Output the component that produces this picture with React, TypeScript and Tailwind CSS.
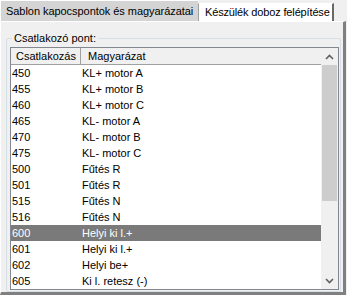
const rows: [string, string][] = [
  ["450", "KL+ motor A"],
  ["455", "KL+ motor B"],
  ["460", "KL+ motor C"],
  ["465", "KL- motor A"],
  ["470", "KL- motor B"],
  ["475", "KL- motor C"],
  ["500", "Fűtés R"],
  ["501", "Fűtés R"],
  ["515", "Fűtés N"],
  ["516", "Fűtés N"],
  ["600", "Helyi ki l.+"],
  ["601", "Helyi ki l.+"],
  ["602", "Helyi be+"],
  ["605", "Ki l. retesz (-)"],
]

const App = () => {
  return (
    <div
      className="w-[347px] h-[295px] bg-[#f0f0f0] text-[11px] text-black flex flex-col overflow-hidden whitespace-nowrap"
      style={{ fontFamily: '"Liberation Sans", Arial, sans-serif' }}
    >
      {/* tabs */}
      <div className="flex items-end h-[21px] shrink-0">
        <div className="h-[21px] w-[198px] bg-[#d4d4d4] border-t border-l border-white flex items-center pl-[5px] leading-none tracking-[-0.05px]">
          Sablon kapocspontok és magyarázatai
        </div>
        <div className="h-[18px] w-[136px] bg-white border-l border-[#a0a0a0] border-r-2 border-r-[#696969] border-t border-t-white flex items-center pl-[6px] leading-none tracking-[-0.15px]">
          Készülék doboz felépítése
        </div>
      </div>

      {/* panel */}
      <div className="w-[346px] h-[274px] border-l border-t border-white border-r-[3px] border-r-[#808080] border-b-[3px] border-b-[#808080] pl-[5px] pr-[2px] pt-[16px] pb-[1px] flex flex-col">
        <div className="relative flex-1 border border-[#d5dfe5] rounded-[2px] pl-[3px] pr-[1px] pt-[8px] pb-[1px] flex flex-col">
          <span className="absolute -top-[8px] left-[5px] bg-[#f0f0f0] px-[2px] leading-[15px]">Csatlakozó pont:</span>
          <div className="flex-1 border border-[#828790] bg-white flex overflow-hidden">
            <div className="flex-1 flex flex-col min-w-0">
              <div className="flex h-[17px] shrink-0 bg-[#f0f0f0] border-b border-[#a0a0a0] leading-none">
                <div className="w-[70px] border-r border-[#a0a0a0] flex items-center pl-[5px]">Csatlakozás</div>
                <div className="flex-1 flex items-center pl-[7px]">Magyarázat</div>
              </div>
              {rows.map(([code, text]) => {
                const sel = code === "600"
                return (
                  <div
                    key={code}
                    className={
                      "flex h-[16px] shrink-0 items-center leading-none " +
                      (sel ? "bg-[#7a7a7a] text-white" : "")
                    }
                  >
                    <div className="w-[71px] pl-[1px]">{code}</div>
                    <div className="flex-1">{text}</div>
                  </div>
                )
              })}
            </div>
            {/* scrollbar */}
            <div className="w-[17px] shrink-0 bg-[#f0f0f0] flex flex-col items-center">
              <div className="h-[17px] flex items-center justify-center">
                <svg width="9" height="6" viewBox="0 0 9 6">
                  <path d="M1 5 L4.5 1.5 L8 5" stroke="#606060" strokeWidth="1.6" fill="none" />
                </svg>
              </div>
              <div className="w-[15px] h-[136px] bg-[#cdcdcd]" />
              <div className="flex-1" />
              <div className="h-[17px] flex items-center justify-center">
                <svg width="9" height="6" viewBox="0 0 9 6">
                  <path d="M1 1 L4.5 4.5 L8 1" stroke="#606060" strokeWidth="1.6" fill="none" />
                </svg>
              </div>
            </div>
          </div>
        </div>
      </div>
    </div>
  )
}

export default App
